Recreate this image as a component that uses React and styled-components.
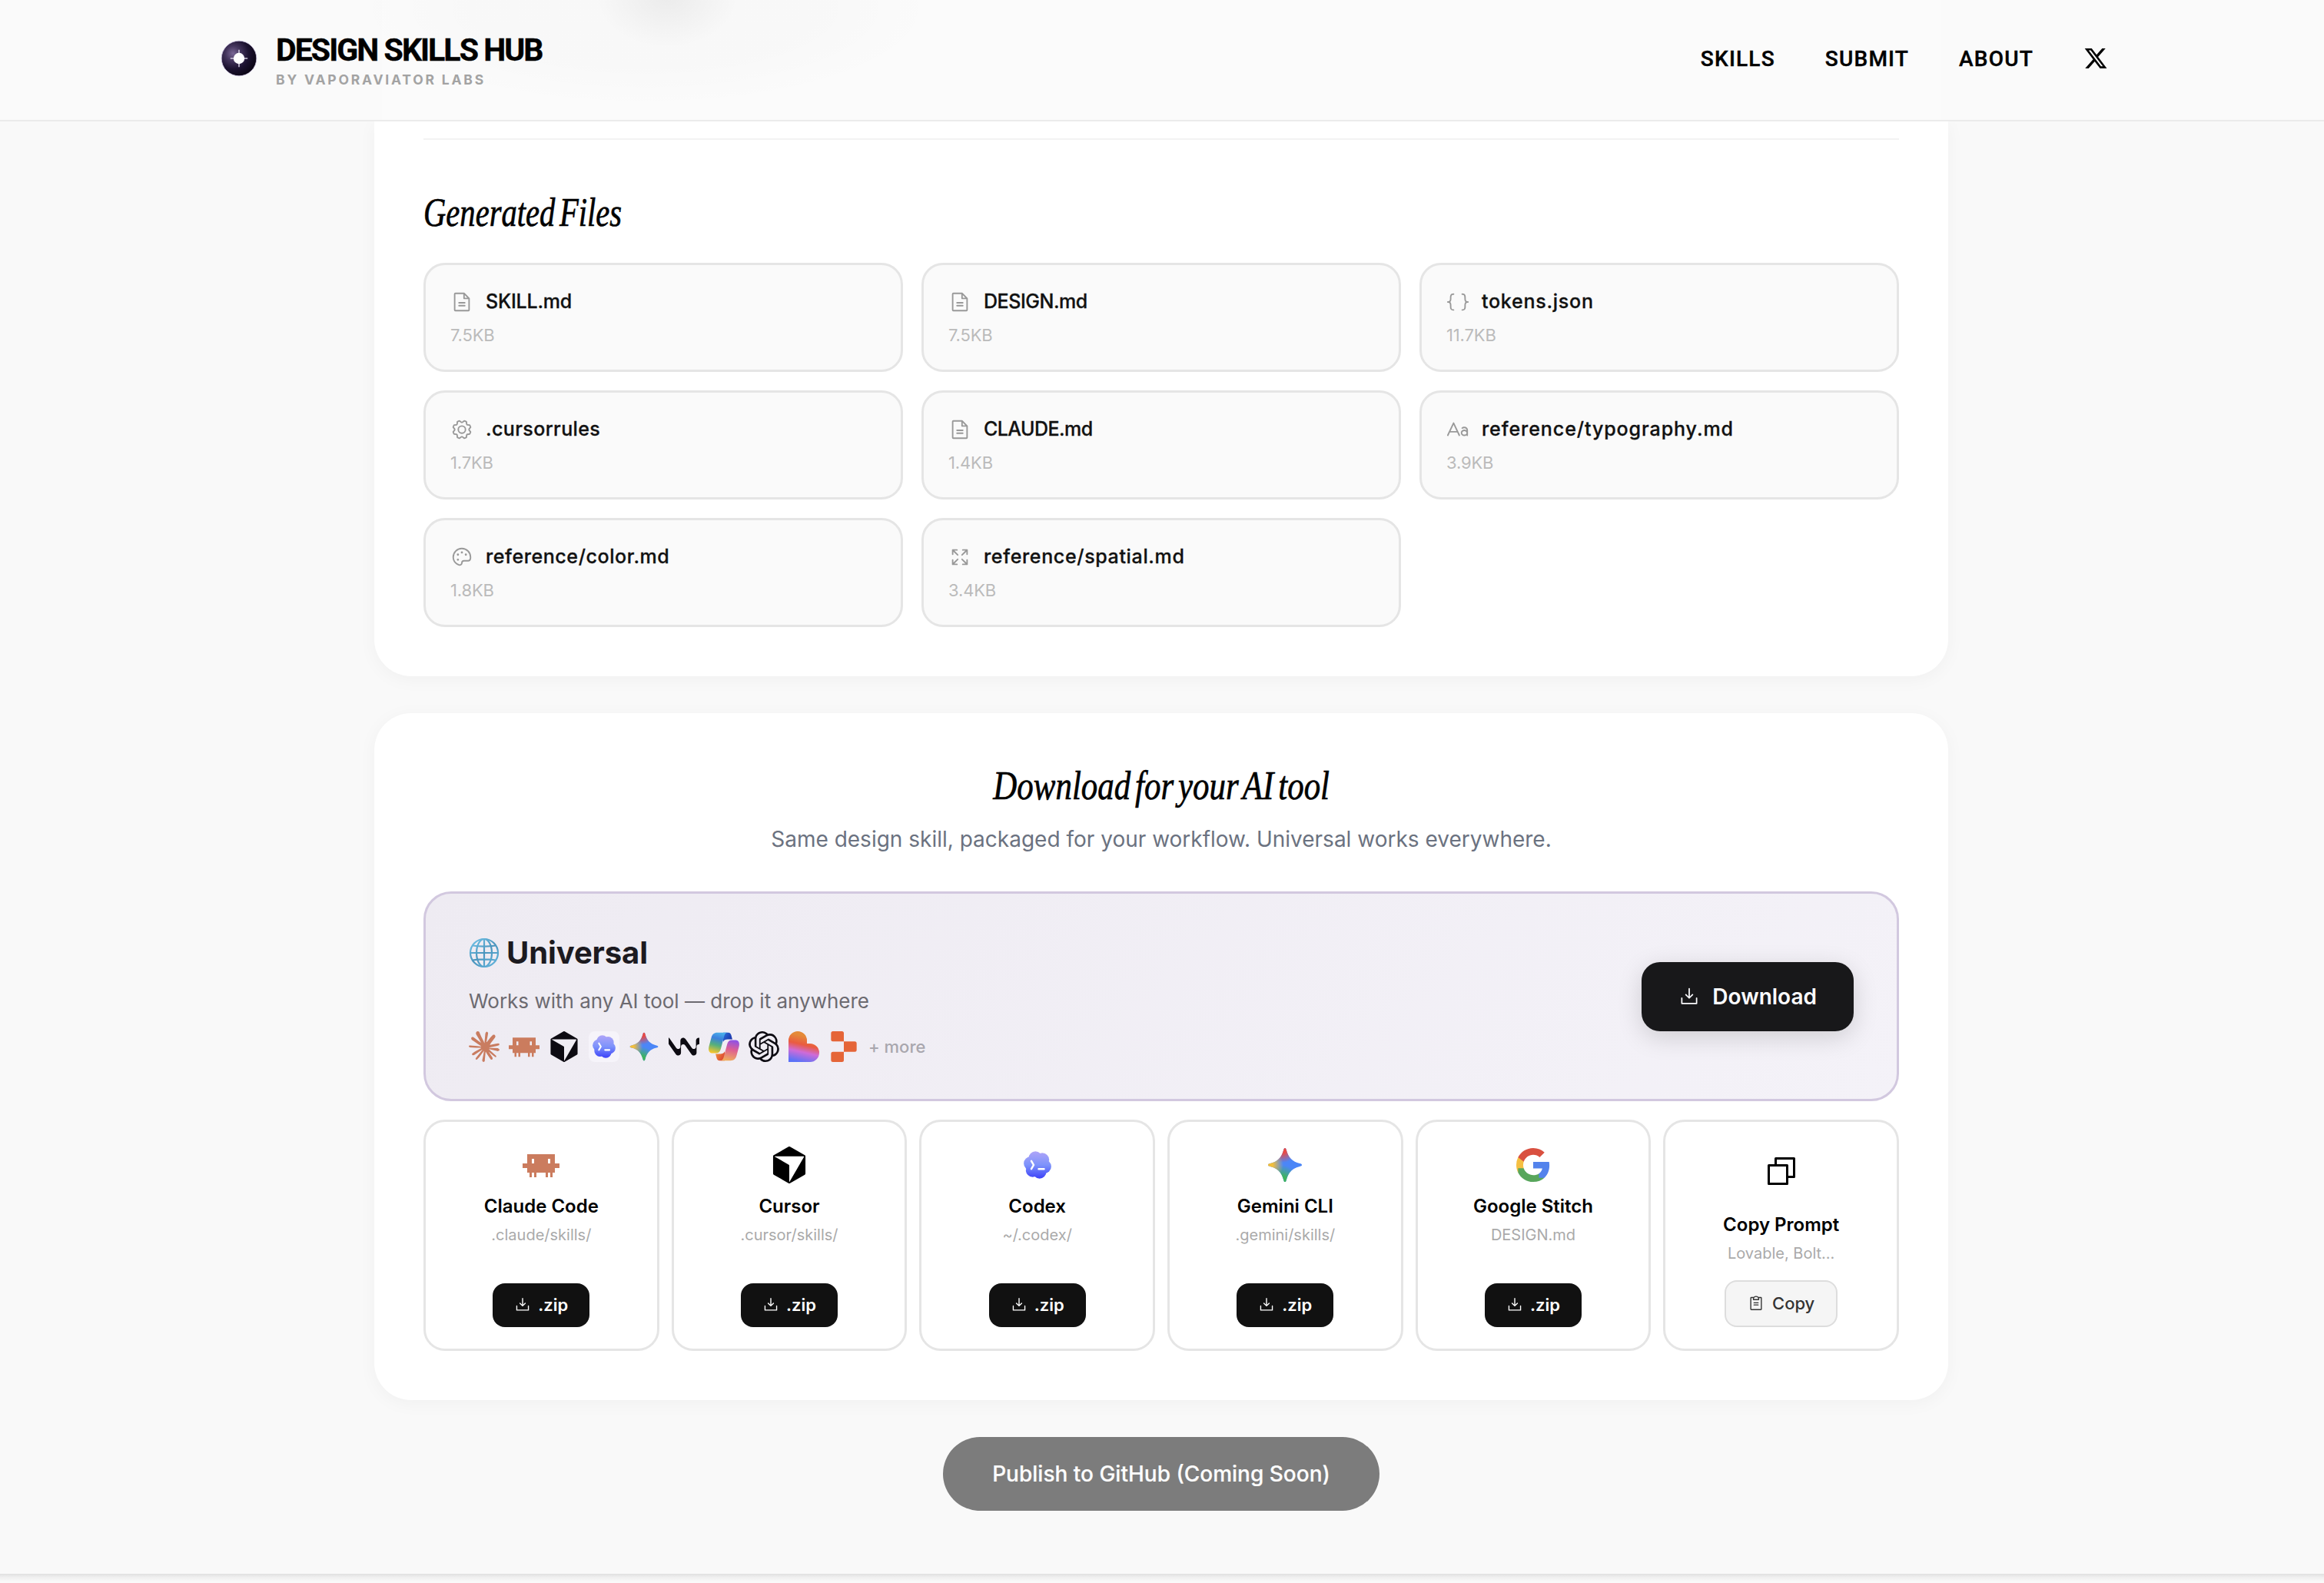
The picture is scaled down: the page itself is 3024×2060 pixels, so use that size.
import React from 'react';
import styled, { createGlobalStyle } from 'styled-components';
import { SiClaude, SiOpenai, SiReplit } from 'react-icons/si';
import {
  PiFileText,
  PiBracketsCurly,
  PiGear,
  PiTextAa,
  PiPalette,
  PiArrowsOut,
  PiDownloadSimple,
  PiClipboardText,
  PiCopy,
} from 'react-icons/pi';

const GlobalStyle = createGlobalStyle`
  * { box-sizing: border-box; }
  body { margin: 0; background: #f9f9f9; }
  h1, h2, h3, p { margin: 0; font-weight: inherit; }
  button { font: inherit; border: 0; margin: 0; cursor: pointer; }
  svg { display: block; flex: none; }
`;

const SANS = `Inter, "Liberation Sans", sans-serif`;
const GROTESK = `Roboto, "Liberation Sans", sans-serif`;
const SERIF = `"Liberation Serif", serif`;

const Page = styled.div`
  width: 3024px;
  height: 2060px;
  overflow: hidden;
  display: flex;
  flex-direction: column;
  background: #f9f9f9;
  font-family: ${SANS};
  color: #000;
`;

/* ---------- header ---------- */

const Header = styled.header`
  position: relative;
  z-index: 1;
  height: 158px;
  flex: none;
  display: flex;
  align-items: center;
  justify-content: space-between;
  padding: 0 281px 4px 287px;
  border-bottom: 2px solid #ebebeb;
  background:
    radial-gradient(ellipse 92px 66px at 868px -4px, rgba(0, 0, 0, 0.05), rgba(0, 0, 0, 0.03) 40%, rgba(0, 0, 0, 0) 100%),
    radial-gradient(ellipse 380px 130px at 840px 10px, rgba(0, 0, 0, 0.01) 60%, rgba(0, 0, 0, 0) 100%),
    linear-gradient(90deg, #fafafa 497px, #fbfbfb 497px, #fbfbfb 2526px, #fafafa 2526px);
`;

const Brand = styled.div`
  display: flex;
  align-items: center;
  gap: 24px;
`;

const BrandText = styled.div`
  display: flex;
  flex-direction: column;
  gap: 4px;
  margin-top: 7px;
`;

const BrandName = styled.h1`
  font: 700 41px/44px ${GROTESK};
  letter-spacing: -1.92px;
  white-space: nowrap;
  -webkit-text-stroke: 0.4px #000;
`;

const BrandBy = styled.p`
  font: 700 17.5px/26px ${SANS};
  letter-spacing: 2.8px;
  color: #a3a3a3;
  white-space: nowrap;
`;

const Nav = styled.nav`
  display: flex;
  align-items: center;
  gap: 65px;
`;

const NavLink = styled.a`
  padding-top: 2px;
  font: 500 28px/40px ${GROTESK};
  letter-spacing: 1.2px;
  -webkit-text-stroke: 0.4px #000;
`;

/* ---------- layout ---------- */

const Main = styled.main`
  width: 2048px;
  margin-left: 487px;
  display: flex;
  flex-direction: column;
  align-items: center;
  gap: 48px;
`;

const Panel = styled.section`
  width: 100%;
  padding: ${(p) => (p.$cut ? '22px 64px 64px' : '64px')};
  border-radius: ${(p) => (p.$cut ? '0 0 48px 48px' : '48px')};
  background: #fff;
  box-shadow: 0 4px 24px rgba(0, 0, 0, 0.04);
`;

const Divider = styled.hr`
  height: 2px;
  border: 0;
  margin: 0 0 64px;
  background: #f3f3f3;
`;

const SerifHeading = styled.h2`
  font: italic 400 53px/60px ${SERIF};
  word-spacing: -6px;
  white-space: nowrap;
  width: max-content;
  -webkit-text-stroke: 0.7px #000;
  transform: scaleX(${(p) => p.$squeeze});
  transform-origin: ${(p) => (p.$centered ? 'center' : 'left')} center;
`;

/* ---------- generated files ---------- */

const FileGrid = styled.div`
  display: grid;
  grid-template-columns: repeat(3, 1fr);
  gap: 24px;
  margin-top: 36px;
`;

const FileCard = styled.article`
  height: 142px;
  padding: 28px 32px;
  display: flex;
  flex-direction: column;
  gap: 8px;
  border: 3px solid #e5e5e5;
  border-radius: 28px;
  background: #fafafa;
`;

const FileRow = styled.div`
  height: 39px;
  display: flex;
  align-items: center;
  gap: 16px;
  color: #999;
  svg { width: 30px; height: 30px; }
`;

const FileName = styled.span`
  font: 500 25px/39px ${SANS};
  letter-spacing: ${(p) => p.$track}px;
  color: #111;
  -webkit-text-stroke: 0.3px #111;
`;

const FileSize = styled.span`
  font: 400 22px/33px ${SANS};
  letter-spacing: -0.15px;
  color: #bbb;
`;

/* ---------- downloads ---------- */

const DownloadHead = styled.div`
  display: flex;
  flex-direction: column;
  align-items: center;
`;

const Lead = styled.p`
  margin: 18px 0 46px;
  font: 400 28px/44px ${SANS};
  color: #6b7280;
`;

const UniversalCard = styled.div`
  height: 273px;
  padding: 0 56px;
  display: flex;
  align-items: center;
  justify-content: space-between;
  border: 3px solid #d2c8df;
  border-radius: 36px;
  background: linear-gradient(135deg, #eeebf2, #f4f2f8);
`;

const UniversalInfo = styled.div`
  display: flex;
  flex-direction: column;
  gap: 18px;
  margin-top: 5px;
`;

const UniversalTitle = styled.h3`
  display: flex;
  align-items: center;
  gap: 9px;
  font: 700 40px/48px ${SANS};
  letter-spacing: -0.1px;
  color: #1c1a20;
`;

const UniversalText = styled.p`
  font: 400 26px/42px ${SANS};
  color: #6c6a70;
`;

const LogoRow = styled.div`
  display: flex;
  align-items: center;
  gap: 12px;
  color: #0d0b12;
`;

const MoreLabel = styled.span`
  font: 500 22px/40px ${SANS};
  color: #a9a7ae;
`;

const CodexTile = styled.span`
  width: 40px;
  height: 40px;
  border-radius: 8px;
  background: #f6f4fa;
`;

const DownloadButton = styled.button`
  height: 90px;
  padding: 0 48px;
  display: flex;
  align-items: center;
  gap: 16px;
  border-radius: 24px;
  background: #18181a;
  color: #fbfbfe;
  font: 600 28px/40px ${SANS};
  box-shadow: 0 8px 32px rgba(0, 0, 0, 0.15);
`;

const ToolGrid = styled.div`
  display: grid;
  grid-template-columns: repeat(6, 1fr);
  gap: 16px;
  margin-top: 24px;
`;

const ToolCard = styled.article`
  height: 301px;
  padding: 32px 16px 28px;
  display: flex;
  flex-direction: column;
  align-items: center;
  border: 3px solid #e5e5e5;
  border-radius: 28px;
  background: #fff;
`;

const ToolIcon = styled.div`
  height: ${(p) => (p.$tall ? 72 : 48)}px;
  padding-bottom: ${(p) => (p.$tall ? 8 : 0)}px;
  display: flex;
  align-items: center;
`;

const ToolName = styled.h3`
  margin-top: 13px;
  font: 600 24px/34px ${SANS};
`;

const ToolPath = styled.p`
  margin-top: 6px;
  font: 400 20px/28px ${SANS};
  color: #aaa;
`;

const ToolButton = styled.button`
  margin-top: auto;
  height: ${(p) => (p.$light ? 61 : 57)}px;
  padding: 0 28px 1px;
  display: flex;
  align-items: center;
  gap: ${(p) => (p.$light ? 10 : 9)}px;
  border: ${(p) => (p.$light ? '2px solid #ddd' : '0')};
  border-radius: 16px;
  background: ${(p) => (p.$light ? '#f5f5f5' : '#111')};
  color: ${(p) => (p.$light ? '#333' : '#fff')};
  font: ${(p) => (p.$light ? 500 : 600)} 22px/30px ${SANS};
`;

const PublishButton = styled.button`
  height: 96px;
  padding: 0 64px;
  border-radius: 48px;
  background: #7c7c7c;
  color: #fdfdfd;
  font: 500 28px/40px ${SANS};
  -webkit-text-stroke: 0.2px #fdfdfd;
`;

const FooterEdge = styled.footer`
  height: 12px;
  flex: none;
  margin-top: auto;
  background: linear-gradient(#e0e0e0, #f0f0f0 40%, #fafafa 90%);
`;

/* ---------- drawings ---------- */

const HubMark = () => (
  <svg width="48" height="48" viewBox="0 0 48 48">
    <defs>
      <radialGradient id="hub" cx="0.33" cy="0.36" r="0.72">
        <stop offset="0" stopColor="#7a6796" />
        <stop offset="0.3" stopColor="#43345c" />
        <stop offset="0.62" stopColor="#1c1230" />
        <stop offset="1" stopColor="#0a0512" />
      </radialGradient>
    </defs>
    <circle cx="24" cy="24" r="22.8" fill="url(#hub)" stroke="#c9c0de" strokeWidth="0.8" />
    <path d="M24 12.8v22.4M12.8 24h22.4" stroke="#cfc8dc" strokeWidth="1.6" />
    <circle cx="24" cy="24" r="7.2" fill="#fff" />
  </svg>
);

const XMark = () => (
  <svg width="32" height="32" viewBox="0 0 24 24">
    <path d="M18.244 2.25h3.308l-7.227 8.26 8.502 11.24H16.17l-5.214-6.817L4.99 21.75H1.68l7.73-8.835L1.254 2.25H8.08l4.713 6.231zm-1.161 17.52h1.833L7.084 4.126H5.117z" />
  </svg>
);

const Globe = () => (
  <svg width="40" height="40" viewBox="0 0 40 40" fill="none" stroke="url(#globe)" strokeWidth="2.2">
    <defs>
      <linearGradient id="globe" gradientUnits="userSpaceOnUse" x1="6" y1="2" x2="34" y2="38">
        <stop offset="0" stopColor="#6fc1e6" />
        <stop offset="0.5" stopColor="#4b95bd" />
        <stop offset="1" stopColor="#62b4dc" />
      </linearGradient>
    </defs>
    <circle cx="20" cy="20" r="18" />
    <ellipse cx="20" cy="20" rx="10" ry="18" />
    <path d="M20.01 2L20 38M2 20l36 .01M5 10.5c8 1.4 22 1.4 30 0M5 29.5c8-1.4 22-1.4 30 0" />
  </svg>
);

const ClaudeCode = ({ size }) => (
  <svg width={size} height={size} viewBox="0 0 48 48">
    <path
      fill="#cb7c5e"
      fillRule="evenodd"
      d="M6 10h36v12h6v6h-6v6h-3v6h-3v-6h-3v6h-3v-6H18v6h-3v-6h-3v6H9v-6H6v-6H0v-6h6zM12 16v6h3v-6zM33 16v6h3v-6z"
    />
  </svg>
);

const Cursor = ({ size }) => (
  <svg width={size} height={size} viewBox="0 0 24 24" fill="currentColor">
    <path d="M11.503.131 1.891 5.678a.84.84 0 0 0-.42.726v11.188c0 .3.162.575.42.724l9.609 5.55a1 1 0 0 0 .998 0l9.61-5.55a.84.84 0 0 0 .42-.724V6.404a.84.84 0 0 0-.42-.726L12.497.131a1.01 1.01 0 0 0-.996 0M2.657 6.338h18.55c.263 0 .43.287.297.515L12.23 22.918c-.062.107-.229.064-.229-.06V12.335a.59.59 0 0 0-.295-.51l-9.11-5.257c-.109-.063-.064-.23.061-.23" />
  </svg>
);

const CODEX_LOBES = [-107, -47, 13, 73, 133, 193].map((deg) => {
  const a = (deg * Math.PI) / 180;
  return [24 + 9.2 * Math.cos(a), 24 + 9.2 * Math.sin(a)];
});

const Codex = ({ size }) => (
  <svg width={size} height={size} viewBox="0 0 48 48">
    <defs>
      <linearGradient id={`codex${size}`} gradientUnits="userSpaceOnUse" x1="24" y1="6" x2="24" y2="42">
        <stop offset="0" stopColor="#b0a5f8" />
        <stop offset="0.5" stopColor="#7d93fb" />
        <stop offset="1" stopColor="#3b3ff8" />
      </linearGradient>
    </defs>
    <g fill={`url(#codex${size})`}>
      <circle cx="24" cy="24" r="12" />
      {CODEX_LOBES.map(([x, y]) => (
        <circle key={x} cx={x} cy={y} r="8.9" />
      ))}
    </g>
    <path d="M16 18.8l3 5.2-3 5.2M25.5 29.2h7" fill="none" stroke="#fff" strokeWidth="2.5" strokeLinecap="round" strokeLinejoin="round" />
  </svg>
);

const STAR =
  'M24 2c1 0 1.4.8 1.9 2.8C28.3 14.2 33.8 19.7 43.2 22.1c2 .5 2.8.9 2.8 1.9s-.8 1.4-2.8 1.9C33.8 28.3 28.3 33.8 25.9 43.2c-.5 2-.9 2.8-1.9 2.8s-1.4-.8-1.9-2.8C19.7 33.8 14.2 28.3 4.8 25.9c-2-.5-2.8-.9-2.8-1.9s.8-1.4 2.8-1.9C14.2 19.7 19.7 14.2 22.1 4.8 22.6 2.8 23 2 24 2z';

const Gemini = ({ size }) => (
  <svg width={size} height={size} viewBox="0 0 48 48">
    <defs>
      <radialGradient id={`gr${size}`} gradientUnits="userSpaceOnUse" cx="21" cy="3" r="18">
        <stop offset="0.3" stopColor="#ea4a44" />
        <stop offset="1" stopColor="#ea4a44" stopOpacity="0" />
      </radialGradient>
      <radialGradient id={`gg${size}`} gradientUnits="userSpaceOnUse" cx="20" cy="45" r="21">
        <stop offset="0.3" stopColor="#3fb45f" />
        <stop offset="1" stopColor="#3fb45f" stopOpacity="0" />
      </radialGradient>
      <radialGradient id={`gy${size}`} gradientUnits="userSpaceOnUse" cx="2" cy="24" r="20">
        <stop offset="0.3" stopColor="#f3bf3a" />
        <stop offset="1" stopColor="#f3bf3a" stopOpacity="0" />
      </radialGradient>
    </defs>
    <path d={STAR} fill="#4b86f7" />
    <path d={STAR} fill={`url(#gg${size})`} />
    <path d={STAR} fill={`url(#gr${size})`} />
    <path d={STAR} fill={`url(#gy${size})`} />
  </svg>
);

const Windsurf = () => (
  <svg width="40" height="40" viewBox="0 0 24 24" fill="currentColor">
    <path d="M23.55 5.067c-1.2038-.002-2.1806.973-2.1806 2.1765v4.8676c0 .972-.8035 1.7594-1.7597 1.7594-.568 0-1.1352-.286-1.4718-.7659l-4.9713-7.1003c-.4125-.5896-1.0837-.941-1.8103-.941-1.1334 0-2.1533.9635-2.1533 2.153v4.8957c0 .972-.7969 1.7594-1.7596 1.7594-.57 0-1.1363-.286-1.4728-.7658L.4076 5.1598C.2822 4.9798 0 5.0688 0 5.2882v4.2452c0 .2147.0656.4228.1884.599l5.4748 7.8183c.3234.462.8006.8052 1.3509.9298 1.3771.313 2.6446-.747 2.6446-2.0977v-4.893c0-.972.7875-1.7593 1.7596-1.7593h.003a1.798 1.798 0 0 1 1.4718.7658l4.9723 7.0994c.4135.5905 1.05.941 1.8093.941 1.1587 0 2.1515-.9645 2.1515-2.153v-4.8948c0-.972.7875-1.7594 1.7596-1.7594h.194a.22.22 0 0 0 .2204-.2202v-4.622a.22.22 0 0 0-.2203-.2203Z" />
  </svg>
);

const Copilot = () => (
  <svg width="40" height="40" viewBox="0 0 40 40">
    <defs>
      <linearGradient id="cpA" x1="0.6" y1="0" x2="0.35" y2="1">
        <stop offset="0" stopColor="#4aaeea" />
        <stop offset="0.3" stopColor="#3c80dc" />
        <stop offset="0.62" stopColor="#55b07c" />
        <stop offset="1" stopColor="#f5c52c" />
      </linearGradient>
      <linearGradient id="cpB" x1="0.6" y1="0" x2="0.4" y2="1">
        <stop offset="0" stopColor="#8f52e6" />
        <stop offset="0.45" stopColor="#dd5f93" />
        <stop offset="1" stopColor="#f0ad5c" />
      </linearGradient>
      <linearGradient id="cpC" x1="0" y1="0" x2="1" y2="0.6">
        <stop offset="0" stopColor="#2c6fdb" />
        <stop offset="1" stopColor="#1c34a8" />
      </linearGradient>
      <linearGradient id="cpD" x1="0" y1="0" x2="1" y2="0.6">
        <stop offset="0" stopColor="#f09a3c" />
        <stop offset="1" stopColor="#dc4432" />
      </linearGradient>
    </defs>
    <path fill="url(#cpC)" d="M19 1.8h6.500c2.400 0 3.500 1.400 4.100 3.800l1.300 5H25c-3 0-5 1-6 3.200z" />
    <path fill="url(#cpD)" d="M21 38.200h-6.500c-2.400 0-3.500-1.400-4.100-3.800l-1.300-5H15c3 0 5-1 6-3.200z" />
    <path fill="url(#cpA)" d="M11.500 1.800H24.500c-2.400.3-3.500 2.200-4.300 5l-4.400 16.400c-1 3.600-2.800 5.400-6.200 5.400H5.200C.8 28.600-.8 25 .5 19.800L3.600 8.200C4.700 4 7 1.800 11.500 1.800z" />
    <path fill="url(#cpB)" d="M28.500 38.200H15.500c2.400-.3 3.500-2.200 4.300-5l4.400-16.400c1-3.600 2.800-5.400 6.200-5.400h4.400c4.400 0 6 3.600 4.700 8.800L36.400 31.800C35.300 36 33 38.200 28.500 38.200z" />
  </svg>
);

const Lovable = () => (
  <svg width="40" height="40" viewBox="0 0 40 40">
    <defs>
      <linearGradient id="lov" gradientUnits="userSpaceOnUse" x1="24" y1="3" x2="15" y2="42">
        <stop offset="0.1" stopColor="#e48a38" />
        <stop offset="0.38" stopColor="#ea5b40" />
        <stop offset="0.62" stopColor="#cf6bd8" />
        <stop offset="0.95" stopColor="#5b72f7" />
      </linearGradient>
    </defs>
    <path fill="url(#lov)" d="M0 40V12a12 12 0 0 1 24 0v4h4a12 12 0 0 1 0 24z" />
  </svg>
);

const Google = () => (
  <svg width="44" height="44" viewBox="2 2 44 44">
    <path fill="#f5bf42" d="M11.69 28.18c-.43-1.32-.69-2.74-.69-4.18s.25-2.86.69-4.18v-5.7H4.34A21.99 21.99 0 0 0 2 24c0 3.55.85 6.91 2.34 9.88z" />
    <path fill="#d95040" d="M24 10.75c3.23 0 6.13 1.11 8.41 3.29l6.31-6.31C34.91 4.18 29.93 2 24 2 15.4 2 7.96 6.93 4.34 14.12l7.35 5.7c1.73-5.2 6.58-9.07 12.31-9.07z" />
    <path fill="#58a65c" d="M24 46c5.94 0 10.92-1.97 14.56-5.33l-7.11-5.52c-1.97 1.32-4.49 2.1-7.45 2.1-5.73 0-10.58-3.87-12.31-9.07H4.34v5.7C7.96 41.07 15.4 46 24 46z" />
    <path fill="#5383ec" d="M45.12 24.5c0-1.56-.14-3.06-.4-4.5H24v8.51h11.84c-.51 2.75-2.06 5.08-4.39 6.64v5.52h7.11c4.16-3.83 6.56-9.47 6.56-16.17z" />
  </svg>
);

/* ---------- data ---------- */

const FILES = [
  { name: 'SKILL.md', size: '7.5KB', Icon: PiFileText, track: -0.2 },
  { name: 'DESIGN.md', size: '7.5KB', Icon: PiFileText, track: -0.45 },
  { name: 'tokens.json', size: '11.7KB', Icon: PiBracketsCurly, track: 0.75 },
  { name: '.cursorrules', size: '1.7KB', Icon: PiGear, track: 0.4 },
  { name: 'CLAUDE.md', size: '1.4KB', Icon: PiFileText, track: -0.55 },
  { name: 'reference/typography.md', size: '3.9KB', Icon: PiTextAa, track: 0.93 },
  { name: 'reference/color.md', size: '1.8KB', Icon: PiPalette, track: 0.58 },
  { name: 'reference/spatial.md', size: '3.4KB', Icon: PiArrowsOut, track: 0.65 },
];

const TOOLS = [
  { name: 'Claude Code', path: '.claude/skills/', icon: <ClaudeCode size={48} /> },
  { name: 'Cursor', path: '.cursor/skills/', icon: <Cursor size={48} /> },
  { name: 'Codex', path: '~/.codex/', icon: <Codex size={48} /> },
  { name: 'Gemini CLI', path: '.gemini/skills/', icon: <Gemini size={48} /> },
  { name: 'Google Stitch', path: 'DESIGN.md', icon: <Google /> },
];

export default function App() {
  return (
    <Page>
      <GlobalStyle />
      <Header>
        <Brand>
          <HubMark />
          <BrandText>
            <BrandName>DESIGN SKILLS HUB</BrandName>
            <BrandBy>BY VAPORAVIATOR LABS</BrandBy>
          </BrandText>
        </Brand>
        <Nav>
          <NavLink>SKILLS</NavLink>
          <NavLink>SUBMIT</NavLink>
          <NavLink>ABOUT</NavLink>
          <XMark />
        </Nav>
      </Header>

      <Main>
        <Panel $cut>
          <Divider />
          <SerifHeading $squeeze={0.766}>Generated Files</SerifHeading>
          <FileGrid>
            {FILES.map(({ name, size, Icon, track }) => (
              <FileCard key={name}>
                <FileRow>
                  <Icon />
                  <FileName $track={track}>{name}</FileName>
                </FileRow>
                <FileSize>{size}</FileSize>
              </FileCard>
            ))}
          </FileGrid>
        </Panel>

        <Panel>
          <DownloadHead>
            <SerifHeading $squeeze={0.81} $centered>Download for your AI tool</SerifHeading>
            <Lead>Same design skill, packaged for your workflow. Universal works everywhere.</Lead>
          </DownloadHead>

          <UniversalCard>
            <UniversalInfo>
              <UniversalTitle>
                <Globe />
                Universal
              </UniversalTitle>
              <UniversalText>Works with any AI tool — drop it anywhere</UniversalText>
              <LogoRow>
                <SiClaude size={40} color="#c97c60" />
                <ClaudeCode size={40} />
                <Cursor size={40} />
                <CodexTile>
                  <Codex size={40} />
                </CodexTile>
                <Gemini size={40} />
                <Windsurf />
                <Copilot />
                <SiOpenai size={40} />
                <Lovable />
                <SiReplit size={40} color="#e56538" />
                <MoreLabel>+ more</MoreLabel>
              </LogoRow>
            </UniversalInfo>
            <DownloadButton>
              <PiDownloadSimple size={28} />
              Download
            </DownloadButton>
          </UniversalCard>

          <ToolGrid>
            {TOOLS.map((tool) => (
              <ToolCard key={tool.name}>
                <ToolIcon>{tool.icon}</ToolIcon>
                <ToolName>{tool.name}</ToolName>
                <ToolPath>{tool.path}</ToolPath>
                <ToolButton>
                  <PiDownloadSimple size={22} />
                  .zip
                </ToolButton>
              </ToolCard>
            ))}
            <ToolCard>
              <ToolIcon $tall>
                <PiCopy size={48} />
              </ToolIcon>
              <ToolName>Copy Prompt</ToolName>
              <ToolPath>Lovable, Bolt...</ToolPath>
              <ToolButton $light>
                <PiClipboardText size={22} />
                Copy
              </ToolButton>
            </ToolCard>
          </ToolGrid>
        </Panel>

        <PublishButton>Publish to GitHub (Coming Soon)</PublishButton>
      </Main>
      <FooterEdge />
    </Page>
  );
}
